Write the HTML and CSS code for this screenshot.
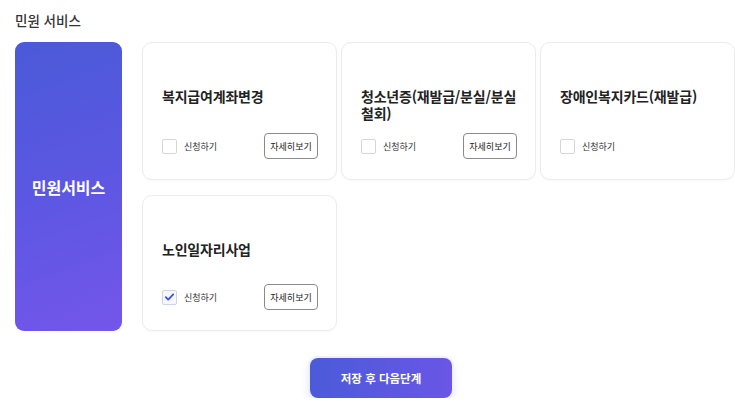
FILE: index.html
```html
<!DOCTYPE html>
<html lang="ko">

<head>
  <meta charset="UTF-8" />
  <meta name="viewport" content="width=device-width, initial-scale=1.0" />
  <title>민원 서비스</title>
  <link rel="stylesheet" href="styles.css">
</head>

<body>
  <div class="page">
    <h2 class="section-title">민원 서비스</h2>

    <div class="service-wrap">
      <div class="service-badge">민원서비스</div>

      <div class="service-grid">
        <div class="card">
          <h3 class="card-title">복지급여계좌변경</h3>
          <div class="card-row">
            <label class="check"><span class="box"></span>신청하기</label>
            <button class="detail-btn">자세히보기</button>
          </div>
        </div>

        <div class="card">
          <h3 class="card-title">청소년증(재발급/분실/분실철회)</h3>
          <div class="card-row">
            <label class="check"><span class="box"></span>신청하기</label>
            <button class="detail-btn">자세히보기</button>
          </div>
        </div>

        <div class="card">
          <h3 class="card-title">장애인복지카드(재발급)</h3>
          <div class="card-row">
            <label class="check"><span class="box"></span>신청하기</label>
          </div>
        </div>

        <div class="card">
          <h3 class="card-title">노인일자리사업</h3>
          <div class="card-row">
            <label class="check">
              <span class="box checked">
                <svg viewBox="0 0 14 14" width="14" height="14"><path d="M3 7.2l2.6 2.6L11 4.2" fill="none" stroke="#3d57d8" stroke-width="2" stroke-linecap="round" stroke-linejoin="round"/></svg>
              </span>신청하기
            </label>
            <button class="detail-btn">자세히보기</button>
          </div>
        </div>
      </div>
    </div>

    <div class="actions">
      <button class="next-btn">저장 후 다음단계</button>
    </div>
  </div>
</body>

</html>
```

FILE: styles.css
```css
* {
  margin: 0;
  padding: 0;
  box-sizing: border-box;
}

body {
  font-family: "Noto Sans CJK KR", "Noto Sans", sans-serif;
  background: #fff;
  color: #222;
  overflow: hidden;
}

.page {
  padding: 10px 0 0 15px;
}

.section-title {
  font-size: 13.5px;
  font-weight: 500;
  color: #333;
  line-height: 20px;
  margin-bottom: 12px;
}

.service-wrap {
  display: flex;
  gap: 20px;
}

.service-badge {
  width: 108px;
  height: 289px;
  border-radius: 9px;
  background: linear-gradient(160deg, #4a5ad8 0%, #5c57e2 50%, #7456ea 100%);
  color: #fff;
  font-size: 16px;
  font-weight: 700;
  display: flex;
  align-items: center;
  justify-content: center;
}

.service-grid {
  display: grid;
  grid-template-columns: repeat(3, 195px);
  grid-template-rows: 138px 136px;
  column-gap: 4px;
  row-gap: 15px;
}

.card {
  border: 1px solid #ececec;
  border-radius: 10px;
  background: #fff;
  box-shadow: 0 1px 3px rgba(0, 0, 0, 0.03);
  padding: 45px 18px 20px 19px;
  display: flex;
  flex-direction: column;
}

.card-title {
  font-size: 14px;
  font-weight: 700;
  line-height: 17px;
  color: #222;
  letter-spacing: -0.2px;
}

.card-row {
  margin-top: auto;
  display: flex;
  align-items: center;
  justify-content: space-between;
  height: 26px;
}

.check {
  display: flex;
  align-items: center;
  gap: 7px;
  font-size: 9px;
  color: #333;
  cursor: pointer;
}

.box {
  width: 15px;
  height: 15px;
  border: 1px solid #d6d6d6;
  border-radius: 2px;
  background: #fff;
  display: flex;
  align-items: center;
  justify-content: center;
}

.box.checked {
  background: #f6f7fc;
  border-color: #cfd3e6;
}

.detail-btn {
  font-family: inherit;
  font-size: 9px;
  color: #222;
  background: #fff;
  border: 1px solid #8a8a8a;
  border-radius: 4px;
  width: 54px;
  height: 26px;
  cursor: pointer;
}

.actions {
  display: flex;
  justify-content: center;
  padding: 27px 0 0 12px;
}

.next-btn {
  font-family: inherit;
  width: 142px;
  height: 40px;
  border: none;
  border-radius: 8px;
  background: linear-gradient(90deg, #4b5bd8 0%, #6a56e6 100%);
  color: #fff;
  font-size: 11.5px;
  font-weight: 700;
  box-shadow: 0 0 0 2px #eef0fb, 0 4px 10px rgba(90, 90, 180, 0.2);
  cursor: pointer;
}
```
